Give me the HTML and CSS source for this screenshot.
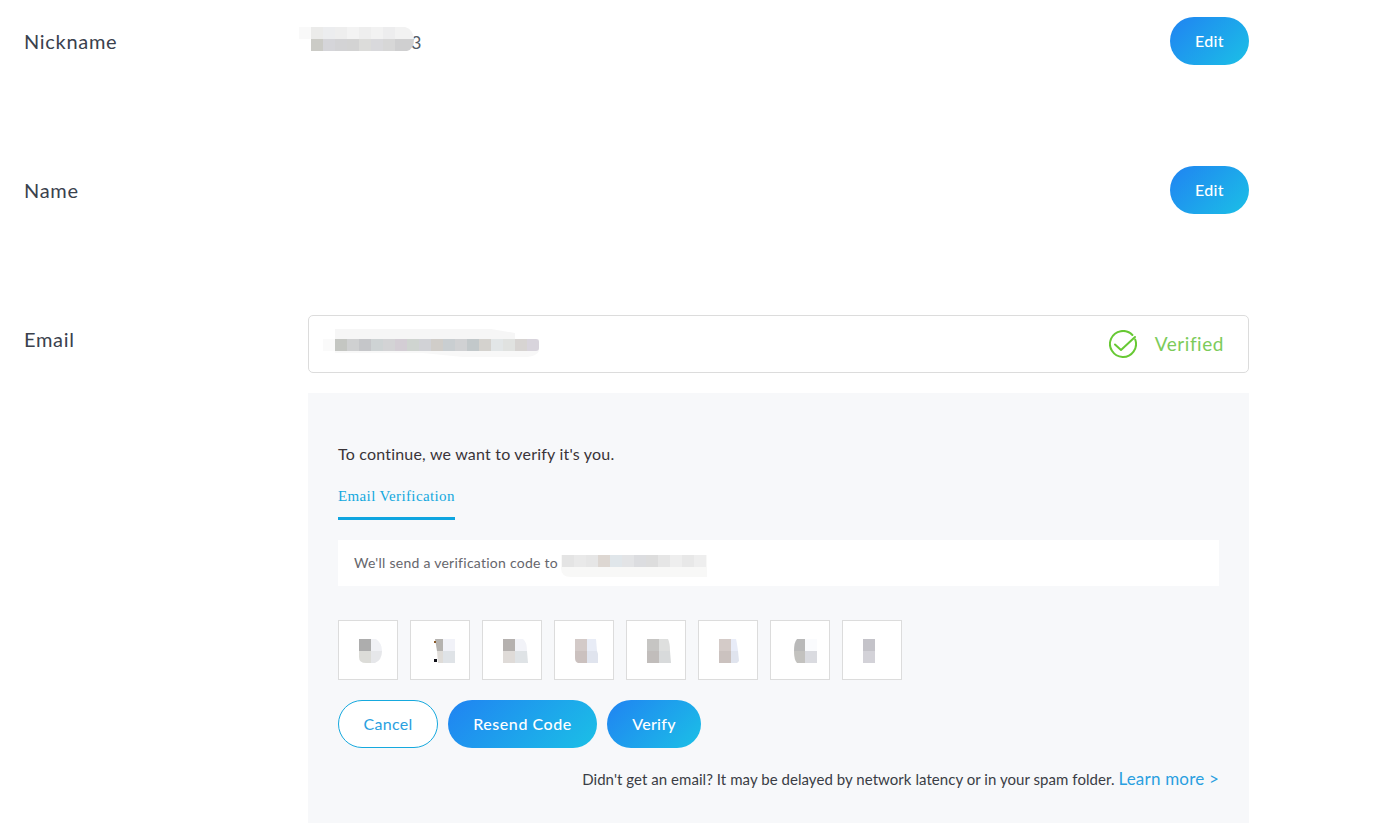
FILE: index.html
```html
<!DOCTYPE html>
<html lang="en">
<head>
<meta charset="utf-8">
<title>Account settings</title>
<link rel="stylesheet" href="styles.css">
</head>
<body>
<main class="page">
  <section class="row">
    <div class="label">Nickname</div>
    <div class="value-line">
      <div class="nick-value">
        <svg class="mosaic nick-mosaic" width="116" height="24" viewBox="0 0 116 24" aria-hidden="true">
          <rect x="0" y="0" width="12" height="12" fill="#f9f9f9"/><rect x="12" y="0" width="12" height="12" fill="#ebebea"/><rect x="24" y="0" width="12" height="12" fill="#ecedef"/><rect x="36" y="0" width="12" height="12" fill="#eeeeee"/><rect x="48" y="0" width="12" height="12" fill="#f3f3f3"/><rect x="60" y="0" width="12" height="12" fill="#eeeeee"/><rect x="72" y="0" width="12" height="12" fill="#f2f2f2"/><rect x="84" y="0" width="12" height="12" fill="#ededee"/><path d="M96 0h10q8 2 9 12h-19z" fill="#f2f2f2"/>
          <rect x="12" y="12" width="12" height="12" fill="#cbcbc6"/><rect x="24" y="12" width="12" height="12" fill="#d5d5d9"/><rect x="36" y="12" width="12" height="12" fill="#d3d3d5"/><rect x="48" y="12" width="12" height="12" fill="#d3d3d3"/><rect x="60" y="12" width="12" height="12" fill="#dcdcda"/><rect x="72" y="12" width="12" height="12" fill="#d9d9dc"/><rect x="84" y="12" width="12" height="12" fill="#d7d7d7"/><path d="M96 12h19q0 10-7 12h-12z" fill="#cfcfd0"/>
        </svg>
        <span class="nick-tail">3</span>
      </div>
      <button class="btn btn-fill btn-edit" type="button">Edit</button>
    </div>
  </section>

  <section class="row">
    <div class="label">Name</div>
    <div class="value-line">
      <div></div>
      <button class="btn btn-fill btn-edit" type="button">Edit</button>
    </div>
  </section>

  <section class="row row-email">
    <div class="label">Email</div>
    <div class="email-col">
      <div class="email-field">
        <svg class="mosaic email-mosaic" width="216" height="28" viewBox="0 0 216 28" aria-hidden="true">
          <path d="M12 0H168L192 4V10H12z" fill="#f6f6f6"/>
          <path d="M0 10H216V22H0z" fill="#fafafa"/>
          <rect x="12" y="10" width="12" height="12" fill="#c4c6c2"/><rect x="24" y="10" width="12" height="12" fill="#cfd0d1"/><rect x="36" y="10" width="12" height="12" fill="#c5c6c9"/><rect x="48" y="10" width="12" height="12" fill="#ced3d4"/><rect x="60" y="10" width="12" height="12" fill="#d3d3d5"/><rect x="72" y="10" width="12" height="12" fill="#d3cdd4"/><rect x="84" y="10" width="12" height="12" fill="#cfd4d0"/><rect x="96" y="10" width="12" height="12" fill="#d1d2d6"/><rect x="108" y="10" width="12" height="12" fill="#d0cdc9"/><rect x="120" y="10" width="12" height="12" fill="#c9ced1"/><rect x="132" y="10" width="12" height="12" fill="#d0d1d3"/><rect x="144" y="10" width="12" height="12" fill="#c2c8ca"/><rect x="156" y="10" width="12" height="12" fill="#d4d2ce"/><rect x="168" y="10" width="12" height="12" fill="#e2e6e7"/><rect x="180" y="10" width="12" height="12" fill="#e0e2e0"/><rect x="192" y="10" width="12" height="12" fill="#d7d4d2"/><path d="M204 10h9q3 0 3 3v6q0 3-3 3h-9z" fill="#d8d4dc"/>
          <path d="M12 22H216Q214 27 204 28H140L100 24H12z" fill="#f8f8f8"/>
        </svg>
        <div class="verified">
          <svg class="check" width="28" height="28" viewBox="0 0 28 28" aria-hidden="true">
            <path d="M23.4 5A13 13 0 1 0 26.2 9.5" fill="none" stroke="#67c934" stroke-width="2" stroke-linecap="round"/>
            <path d="M6 14.5l6 5.5L26 7" fill="none" stroke="#67c934" stroke-width="2" stroke-linecap="round" stroke-linejoin="round"/>
          </svg>
          <span class="verified-text">Verified</span>
        </div>
      </div>

      <div class="panel">
        <p class="intro">To continue, we want to verify it's you.</p>
        <div class="tabs"><span class="tab">Email Verification</span></div>
        <div class="send-note">
          <span class="send-text">We'll send a verification code to</span>
          <svg class="mosaic" width="146" height="22" viewBox="0 0 146 22" aria-hidden="true">
            <path d="M0 0H146V22H10Q0 22 0 13z" fill="#f8f8f7"/>
            <rect x="1" y="0" width="12" height="12" fill="#e4e4e4"/><rect x="13" y="0" width="12" height="12" fill="#e9e9e9"/><rect x="25" y="0" width="12" height="12" fill="#e6e6e6"/><rect x="37" y="0" width="12" height="12" fill="#ddd7d2"/><rect x="49" y="0" width="12" height="12" fill="#e0e6ea"/><rect x="61" y="0" width="12" height="12" fill="#e3e4e6"/><rect x="73" y="0" width="12" height="12" fill="#dcdde0"/><rect x="85" y="0" width="12" height="12" fill="#dddddd"/><rect x="97" y="0" width="12" height="12" fill="#e6e6e6"/><rect x="109" y="0" width="12" height="12" fill="#eeeeee"/><rect x="121" y="0" width="12" height="12" fill="#e8e8e8"/><rect x="133" y="0" width="12" height="12" fill="#eeeeee"/>
          </svg>
        </div>

        <div class="codes">
          <div class="code"><svg width="58" height="58" viewBox="0 0 58 58" aria-hidden="true"><rect x="20" y="18" width="12" height="12" fill="#adadad"/><path d="M32 18h5q6 4 6 12H32z" fill="#f0f1f5"/><path d="M20 30h12v12h-5q-7 0-7-6z" fill="#dcdcd8"/><path d="M32 30h11q0 9-7 12h-4z" fill="#e6e7ea"/></svg></div>
          <div class="code"><svg width="58" height="58" viewBox="0 0 58 58" aria-hidden="true"><path d="M24 18h8v12h-6z" fill="#b5b3b0"/><rect x="32" y="18" width="12" height="12" fill="#f1f2f8"/><path d="M26 30h6v12h-5z" fill="#dfdcd8"/><rect x="32" y="30" width="12" height="12" fill="#dfe3e7"/><rect x="23" y="20" width="2" height="2" fill="#8a5a2a"/><rect x="23" y="38" width="3" height="3" fill="#101018"/></svg></div>
          <div class="code"><svg width="58" height="58" viewBox="0 0 58 58" aria-hidden="true"><rect x="20" y="18" width="12" height="12" fill="#b5b1af"/><path d="M32 18h8q4 3 4 12H32z" fill="#f2f3f8"/><rect x="20" y="30" width="12" height="12" fill="#dfdbd8"/><path d="M32 30h12l1 12H32z" fill="#dfe3e6"/></svg></div>
          <div class="code"><svg width="58" height="58" viewBox="0 0 58 58" aria-hidden="true"><rect x="20" y="18" width="12" height="12" fill="#d3cac8"/><path d="M32 18h9l1 12H32z" fill="#e8ecf6"/><path d="M20 30h12v12h-9q-3-1-3-5z" fill="#cbc1bf"/><path d="M32 30h10l1 3v9H32z" fill="#e0e4ee"/></svg></div>
          <div class="code"><svg width="58" height="58" viewBox="0 0 58 58" aria-hidden="true"><rect x="20" y="18" width="12" height="12" fill="#c6c5c3"/><path d="M32 18h9q2 4 2 12H32z" fill="#dedfde"/><rect x="20" y="30" width="12" height="12" fill="#c1bdbb"/><path d="M32 30h11l1 12H32z" fill="#d8dadb"/></svg></div>
          <div class="code"><svg width="58" height="58" viewBox="0 0 58 58" aria-hidden="true"><rect x="20" y="18" width="12" height="12" fill="#d4cbc8"/><path d="M32 18h5q1 4 2 12h-7z" fill="#e8ecf8"/><rect x="20" y="30" width="12" height="12" fill="#cbc2bf"/><path d="M32 30h7l1 10-2 2h-6z" fill="#e0e4ee"/></svg></div>
          <div class="code"><svg width="58" height="58" viewBox="0 0 58 58" aria-hidden="true"><path d="M26 18h8v12h-11q0-9 3-12z" fill="#b9b9b9"/><rect x="34" y="18" width="12" height="12" fill="#fafbfd"/><path d="M23 30h11v12h-8q-3-3-3-12z" fill="#c3c2bf"/><rect x="34" y="30" width="12" height="12" fill="#dadbe0"/></svg></div>
          <div class="code"><svg width="58" height="58" viewBox="0 0 58 58" aria-hidden="true"><rect x="20" y="18" width="12" height="12" fill="#c4c3c9"/><rect x="20" y="30" width="12" height="12" fill="#d3d2d8"/></svg></div>
        </div>

        <div class="actions">
          <button class="btn btn-line btn-cancel" type="button">Cancel</button>
          <button class="btn btn-fill btn-resend" type="button">Resend Code</button>
          <button class="btn btn-fill btn-verify" type="button">Verify</button>
        </div>

        <p class="help">Didn't get an email? It may be delayed by network latency or in your spam folder. <a class="learn" href="#">Learn more &gt;</a></p>
      </div>
    </div>
  </section>
</main>
</body>
</html>
```

FILE: styles.css
```css
* { box-sizing: border-box; }

html, body {
  margin: 0;
  height: 823px;
  overflow: hidden;
  background: #fff;
}

body {
  font-family: "Lato", "Noto Sans", sans-serif;
  color: #3a414d;
}

.page {
  width: 1249px;
  padding: 17px 0 0 24px;
}

.row {
  display: grid;
  grid-template-columns: 284px 941px;
  height: 48px;
  margin-bottom: 101px;
}

.row-email {
  height: auto;
  margin-bottom: 0;
}

.label {
  font-size: 20px;
  line-height: 48px;
  letter-spacing: 0.7px;
  height: 48px;
}

.value-line {
  display: flex;
  justify-content: space-between;
  align-items: center;
}

.nick-value {
  position: relative;
  height: 48px;
  line-height: 50px;
  font-size: 18px;
  padding-left: 103px;
  color: #555b66;
}

.mosaic { display: block; flex: none; }

.nick-mosaic {
  position: absolute;
  left: -9px;
  top: 10px;
}

.btn {
  font-family: inherit;
  height: 48px;
  border-radius: 24px;
  font-size: 16px;
  padding: 0 0 2px;
  cursor: pointer;
  letter-spacing: 0.3px;
}

.btn-fill {
  border: 0;
  color: #fff;
  font-weight: 500;
  background: linear-gradient(135deg, #2083f2 0%, #1bc0e6 100%);
}

.btn-line {
  border: 1px solid #16a9de;
  color: #2a9fe0;
  background: #fff;
}

.btn-edit { width: 79px; }
.btn-cancel { width: 100px; }
.btn-resend { width: 149px; letter-spacing: 0.55px; }
.btn-verify { width: 94px; }

.email-col { display: flex; flex-direction: column; }

.email-field {
  height: 58px;
  border: 1px solid #dcdcdc;
  border-radius: 5px;
  display: flex;
  align-items: center;
  justify-content: space-between;
  padding: 0 24px 0 14px;
}

.email-mosaic { margin-bottom: 2px; }

.verified {
  display: flex;
  align-items: center;
  gap: 18px;
}

.verified-text {
  color: #7ccb5a;
  font-size: 19px;
  letter-spacing: 0.55px;
  margin-bottom: 2px;
}

.panel {
  margin-top: 20px;
  height: 430px;
  padding: 51px 30px 0;
  background: #f7f8fa;
}

.intro {
  margin: 0;
  font-size: 16px;
  line-height: 20px;
  letter-spacing: 0.2px;
  color: #3a3438;
}

.tabs {
  margin-top: 22px;
  display: flex;
}

.tab {
  font-family: "Liberation Serif", serif;
  font-size: 15px;
  line-height: 20px;
  color: #13a8de;
  padding-bottom: 11px;
  border-bottom: 3px solid #0ea5e0;
  letter-spacing: 0.37px;
}

.send-note {
  margin-top: 20px;
  height: 46px;
  background: #fff;
  padding: 0 16px;
  display: flex;
  align-items: center;
  gap: 3px;
  font-size: 14px;
  letter-spacing: 0.26px;
  color: #66666c;
}

.send-text { margin-bottom: 2px; }

.send-note .mosaic { margin-top: 6px; }

.codes {
  margin-top: 34px;
  display: flex;
  gap: 12px;
}

.code {
  width: 60px;
  height: 60px;
  background: #fff;
  border: 1px solid #dcdcdc;
}

.code svg { display: block; }

.actions {
  margin-top: 20px;
  display: flex;
  gap: 10px;
}

.help {
  margin: 20px 0 0;
  text-align: right;
  font-size: 15px;
  line-height: 22px;
  letter-spacing: 0.05px;
  color: #3a3d45;
}

.learn {
  font-size: 17px;
  letter-spacing: 0.2px;
  color: #2a9fe0;
  text-decoration: none;
}
```
